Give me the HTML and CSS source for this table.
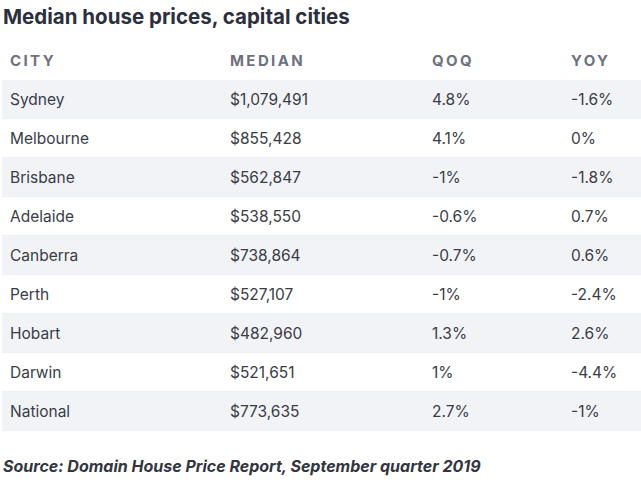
FILE: index.html
```html
<!DOCTYPE html>
<html>
<head>
<meta charset="utf-8">
<link rel="stylesheet" href="styles.css">
</head>
<body>
<div class="wrap">
  <h1 class="title">Median house prices, capital cities</h1>
  <table class="prices">
    <colgroup>
      <col class="c1"><col class="c2"><col class="c3"><col class="c4">
    </colgroup>
    <thead>
      <tr><th>CITY</th><th>MEDIAN</th><th>QOQ</th><th>YOY</th></tr>
    </thead>
    <tbody>
      <tr><td>Sydney</td><td>$1,079,491</td><td>4.8%</td><td>-1.6%</td></tr>
      <tr><td>Melbourne</td><td>$855,428</td><td>4.1%</td><td>0%</td></tr>
      <tr><td>Brisbane</td><td>$562,847</td><td>-1%</td><td>-1.8%</td></tr>
      <tr><td>Adelaide</td><td>$538,550</td><td>-0.6%</td><td>0.7%</td></tr>
      <tr><td>Canberra</td><td>$738,864</td><td>-0.7%</td><td>0.6%</td></tr>
      <tr><td>Perth</td><td>$527,107</td><td>-1%</td><td>-2.4%</td></tr>
      <tr><td>Hobart</td><td>$482,960</td><td>1.3%</td><td>2.6%</td></tr>
      <tr><td>Darwin</td><td>$521,651</td><td>1%</td><td>-4.4%</td></tr>
      <tr><td>National</td><td>$773,635</td><td>2.7%</td><td>-1%</td></tr>
    </tbody>
  </table>
  <p class="source">Source: Domain House Price Report, September quarter 2019</p>
</div>
</body>
</html>
```

FILE: styles.css
```css
html, body {
  margin: 0;
  padding: 0;
  background: #ffffff;
}
body {
  font-family: "Inter", "Liberation Sans", sans-serif;
  color: #3a3c46;
}
.wrap {
  width: 641px;
  padding-top: 4px;
}
.title {
  margin: 0 0 0 3px;
  font-size: 20.5px;
  line-height: 26px;
  font-weight: 700;
  color: #2c2f3d;
  height: 37px;
}
.prices {
  margin-left: 2px;
  width: 639px;
  border-collapse: collapse;
  table-layout: fixed;
}
.c1 { width: 220px; }
.c2 { width: 202px; }
.c3 { width: 139px; }
.c4 { width: 78px; }
.prices th {
  height: 39px;
  padding: 0 0 0 8px;
  text-align: left;
  font-size: 15px;
  font-weight: 700;
  letter-spacing: 2.4px;
  color: #6f717e;
}
.prices td {
  height: 38px;
  padding: 0 0 0 8px;
  font-size: 15.5px;
  font-weight: 400;
  color: #3a3c46;
  border-bottom: 1px solid #eeeff2;
}
.prices tbody tr:nth-child(odd) td {
  background: #f2f3f6;
}
.source {
  margin: 25px 0 0 3px;
  font-size: 16px;
  font-weight: 700;
  font-style: italic;
  color: #33353f;
}
```
